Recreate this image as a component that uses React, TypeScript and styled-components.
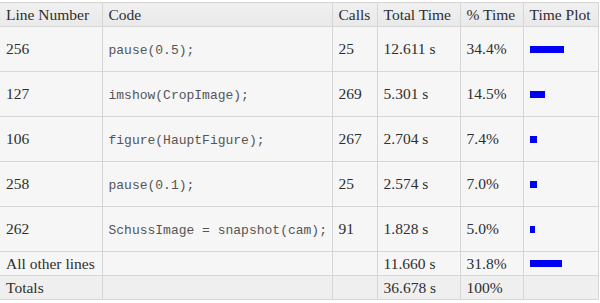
import React from 'react';
import styled, { createGlobalStyle } from 'styled-components';

const GlobalStyle = createGlobalStyle`
  body {
    margin: 0;
    background: #ffffff;
  }
`;

const Table = styled.table`
  margin-top: 2px;
  width: 598px;
  table-layout: fixed;
  border-collapse: collapse;
  font-family: 'Liberation Serif', 'Times New Roman', serif;
  font-size: 15.5px;
  color: #2e2e2e;
  background: #f6f6f6;
`;

const HeadCell = styled.th`
  height: 23px;
  padding: 0 6px;
  text-align: left;
  font-weight: normal;
  white-space: nowrap;
  background: linear-gradient(#f0f0f0, #e9e9e9);
  border: 1px solid #d6d6d6;
  border-left: ${(p: { $first?: boolean }) => (p.$first ? 'none' : '1px solid #d6d6d6')};
`;

const Row = styled.tr<{ $total?: boolean }>`
  background: ${(p) => (p.$total ? '#efefef' : '#f6f6f6')};
`;

const Cell = styled.td<{ $tall?: boolean; $first?: boolean }>`
  height: ${(p) => (p.$tall ? '44px' : '23px')};
  padding: 0 6px;
  vertical-align: middle;
  white-space: nowrap;
  border: 1px solid #d6d6d6;
  border-left: ${(p) => (p.$first ? 'none' : '1px solid #d6d6d6')};
`;

const Code = styled.span`
  font-family: 'Liberation Mono', 'Courier New', monospace;
  font-size: 13px;
  color: #555555;
`;

const Bar = styled.div`
  height: 7px;
  background: #0000f4;
`;

type Line = { line: string; code: string; calls: string; time: string; pct: number };

const lines: Line[] = [
  { line: '256', code: 'pause(0.5);', calls: '25', time: '12.611 s', pct: 34.4 },
  { line: '127', code: 'imshow(CropImage);', calls: '269', time: '5.301 s', pct: 14.5 },
  { line: '106', code: 'figure(HauptFigure);', calls: '267', time: '2.704 s', pct: 7.4 },
  { line: '258', code: 'pause(0.1);', calls: '25', time: '2.574 s', pct: 7.0 },
  { line: '262', code: 'SchussImage = snapshot(cam);', calls: '91', time: '1.828 s', pct: 5.0 },
];

const widths = [102, 230, 45, 83, 63, 75];

export default function App() {
  return (
    <>
      <GlobalStyle />
      <Table>
        <colgroup>
          {widths.map((w, i) => (
            <col key={i} style={{ width: w }} />
          ))}
        </colgroup>
        <thead>
          <tr>
            <HeadCell $first>Line Number</HeadCell>
            <HeadCell>Code</HeadCell>
            <HeadCell>Calls</HeadCell>
            <HeadCell>Total Time</HeadCell>
            <HeadCell>% Time</HeadCell>
            <HeadCell>Time Plot</HeadCell>
          </tr>
        </thead>
        <tbody>
          {lines.map((l) => (
            <Row key={l.line}>
              <Cell $tall $first>{l.line}</Cell>
              <Cell $tall>
                <Code>{l.code}</Code>
              </Cell>
              <Cell $tall>{l.calls}</Cell>
              <Cell $tall>{l.time}</Cell>
              <Cell $tall>{l.pct.toFixed(1)}%</Cell>
              <Cell $tall>
                <Bar style={{ width: Math.round(l.pct) }} />
              </Cell>
            </Row>
          ))}
          <Row>
            <Cell $first>All other lines</Cell>
            <Cell />
            <Cell />
            <Cell>11.660 s</Cell>
            <Cell>31.8%</Cell>
            <Cell>
              <Bar style={{ width: 32 }} />
            </Cell>
          </Row>
          <Row $total>
            <Cell $first>Totals</Cell>
            <Cell />
            <Cell />
            <Cell>36.678 s</Cell>
            <Cell>100%</Cell>
            <Cell />
          </Row>
        </tbody>
      </Table>
    </>
  );
}
